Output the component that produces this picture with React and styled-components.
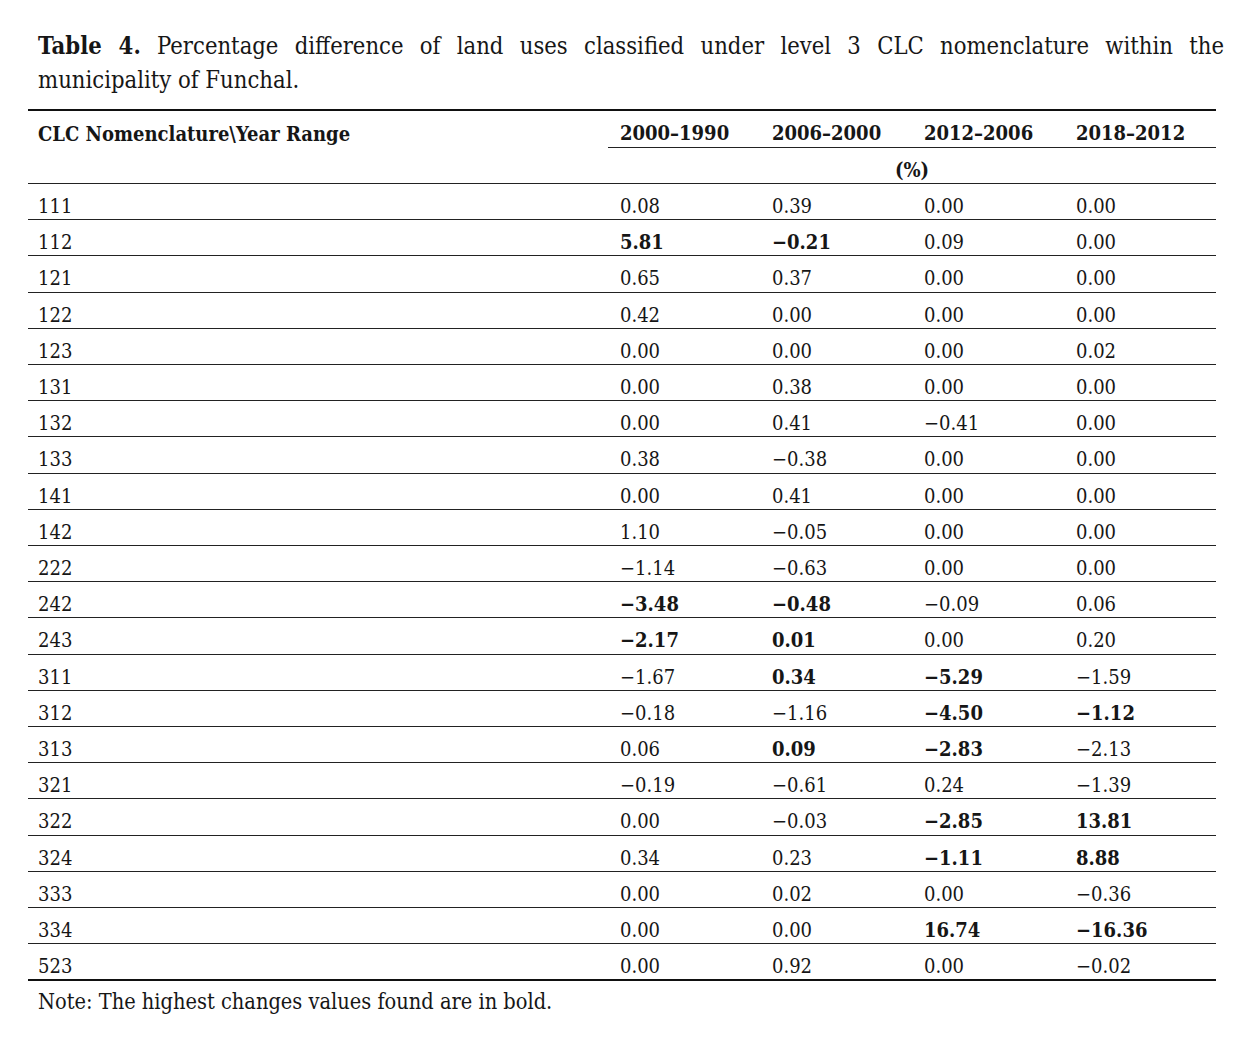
import React from "react";
import styled, { createGlobalStyle } from "styled-components";

const GlobalStyle = createGlobalStyle`
  body {
    margin: 0;
    background: #fff;
    color: #161616;
    font-family: "DejaVu Serif", "Liberation Serif", serif;
    font-stretch: condensed;
  }
`;

const rows = [
  ["111", "0.08", "0.39", "0.00", "0.00"],
  ["112", "*5.81", "*−0.21", "0.09", "0.00"],
  ["121", "0.65", "0.37", "0.00", "0.00"],
  ["122", "0.42", "0.00", "0.00", "0.00"],
  ["123", "0.00", "0.00", "0.00", "0.02"],
  ["131", "0.00", "0.38", "0.00", "0.00"],
  ["132", "0.00", "0.41", "−0.41", "0.00"],
  ["133", "0.38", "−0.38", "0.00", "0.00"],
  ["141", "0.00", "0.41", "0.00", "0.00"],
  ["142", "1.10", "−0.05", "0.00", "0.00"],
  ["222", "−1.14", "−0.63", "0.00", "0.00"],
  ["242", "*−3.48", "*−0.48", "−0.09", "0.06"],
  ["243", "*−2.17", "*0.01", "0.00", "0.20"],
  ["311", "−1.67", "*0.34", "*−5.29", "−1.59"],
  ["312", "−0.18", "−1.16", "*−4.50", "*−1.12"],
  ["313", "0.06", "*0.09", "*−2.83", "−2.13"],
  ["321", "−0.19", "−0.61", "0.24", "−1.39"],
  ["322", "0.00", "−0.03", "*−2.85", "*13.81"],
  ["324", "0.34", "0.23", "*−1.11", "*8.88"],
  ["333", "0.00", "0.02", "0.00", "−0.36"],
  ["334", "0.00", "0.00", "*16.74", "*−16.36"],
  ["523", "0.00", "0.92", "0.00", "−0.02"],
];

const years = ["2000–1990", "2006–2000", "2012–2006", "2018–2012"];

export default function App() {
  return (
    <Page>
      <GlobalStyle />
      <Caption>
        <strong>Table 4.</strong> Percentage difference of land uses classified
        under level 3 CLC nomenclature within the municipality of Funchal.
      </Caption>
      <Table>
        <colgroup>
          <Col $w={580} />
          <Col $w={152} />
          <Col $w={152} />
          <Col $w={152} />
          <Col $w={152} />
        </colgroup>
        <thead>
          <tr>
            <HeadCell rowSpan={2}>CLC Nomenclature\Year Range</HeadCell>
            {years.map((y) => (
              <YearCell key={y}>{y}</YearCell>
            ))}
          </tr>
          <tr>
            <UnitCell colSpan={4}>(%)</UnitCell>
          </tr>
        </thead>
        <tbody>
          {rows.map((r, i) => (
            <Row key={r[0]} $last={i === rows.length - 1}>
              {r.map((v, j) => {
                const bold = v.startsWith("*");
                return (
                  <Cell key={j} $bold={bold}>
                    {bold ? v.slice(1) : v}
                  </Cell>
                );
              })}
            </Row>
          ))}
        </tbody>
      </Table>
      <Note>Note: The highest changes values found are in bold.</Note>
    </Page>
  );
}

const Page = styled.div`
  padding: 29px 0 40px 28px;
  width: 1196px;
`;

const Caption = styled.p`
  margin: 0 0 12px 10px;
  width: 1186px;
  font-size: 23.6px;
  line-height: 34px;
  text-align: justify;

  strong {
    font-weight: 700;
  }
`;

const Table = styled.table`
  width: 1188px;
  border-collapse: collapse;
  table-layout: fixed;
  border-top: 2px solid #111;
  border-bottom: 2px solid #111;
  font-size: 20px;
`;

const Col = styled.col`
  width: ${(p) => p.$w}px;
`;

const HeadCell = styled.th`
  text-align: left;
  vertical-align: top;
  font-weight: 700;
  padding: 9px 10px 0;
  line-height: 28px;
  border-bottom: 1px solid #222;
`;

const YearCell = styled.th`
  text-align: left;
  font-weight: 700;
  padding: 8px 12px 0;
  line-height: 28px;
  border-bottom: 1px solid #222;
`;

const UnitCell = styled.th`
  text-align: center;
  font-weight: 700;
  padding: 9px 0 0;
  line-height: 26px;
  border-bottom: 1px solid #222;
`;

const Row = styled.tr`
  border-bottom: ${(p) => (p.$last ? "none" : "1px solid #222")};
`;

const Cell = styled.td`
  padding: 9px 12px 0;
  line-height: 26.2px;
  font-weight: ${(p) => (p.$bold ? 700 : 400)};

  &:first-child {
    padding-left: 10px;
  }
`;

const Note = styled.p`
  margin: 6px 0 0 10px;
  font-size: 21.6px;
  line-height: 30px;
`;
